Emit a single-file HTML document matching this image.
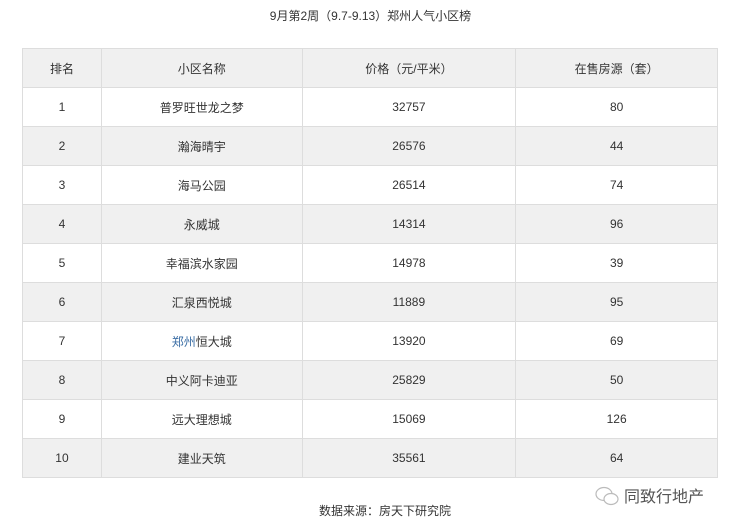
<!DOCTYPE html>
<html><head><meta charset="utf-8"><style>
body{margin:0;width:741px;height:527px;background:#fff;font-family:"Liberation Sans","Noto Sans CJK SC",sans-serif;color:#333;font-size:12px;position:relative;overflow:hidden}
.t{position:absolute;top:8px;left:0;width:741px;text-align:center;font-size:12px;line-height:16px}
table{position:absolute;left:22px;top:48px;border-collapse:collapse;width:696px}
td{border:1px solid #ddd;height:38px;text-align:center;padding:0;font-size:12px}
tr:nth-child(odd){background:#f0f0f0}
.b{color:#3b6ea5}
.src{position:absolute;left:319px;top:502px;font-size:12px}
.wx{position:absolute;left:594px;top:483px;font-size:16px;color:#555}
</style></head><body>
<div class="t">9月第2周（9.7-9.13）郑州人气小区榜</div>
<table>
<colgroup><col style="width:79px"><col style="width:201px"><col style="width:214px"><col style="width:202px"></colgroup>
<tr><td>排名</td><td>小区名称</td><td>价格（元/平米）</td><td>在售房源（套）</td></tr>
<tr><td>1</td><td>普罗旺世龙之梦</td><td>32757</td><td>80</td></tr>
<tr><td>2</td><td>瀚海晴宇</td><td>26576</td><td>44</td></tr>
<tr><td>3</td><td>海马公园</td><td>26514</td><td>74</td></tr>
<tr><td>4</td><td>永威城</td><td>14314</td><td>96</td></tr>
<tr><td>5</td><td>幸福滨水家园</td><td>14978</td><td>39</td></tr>
<tr><td>6</td><td>汇泉西悦城</td><td>11889</td><td>95</td></tr>
<tr><td>7</td><td><span class="b">郑州</span>恒大城</td><td>13920</td><td>69</td></tr>
<tr><td>8</td><td>中义阿卡迪亚</td><td>25829</td><td>50</td></tr>
<tr><td>9</td><td>远大理想城</td><td>15069</td><td>126</td></tr>
<tr><td>10</td><td>建业天筑</td><td>35561</td><td>64</td></tr>
</table>
<div class="wx"><svg width="26" height="22" viewBox="0 0 26 22" style="vertical-align:-5px;margin-right:4px"><ellipse cx="10" cy="9" rx="8" ry="6.5" fill="none" stroke="#bbb" stroke-width="1.2"/><ellipse cx="17" cy="14" rx="7" ry="5.5" fill="#fff" stroke="#bbb" stroke-width="1.2"/></svg>同致行地产</div>
<div class="src">数据来源：房天下研究院</div>
</body></html>
